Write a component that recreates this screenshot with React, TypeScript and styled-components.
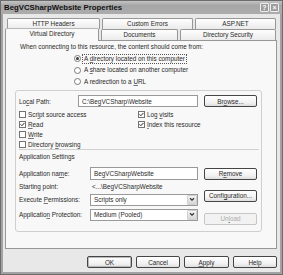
import React from 'react';
import styled, { createGlobalStyle } from 'styled-components';

const Global = createGlobalStyle`
  html, body { margin: 0; padding: 0; background: #e8e8e8; }
  body { font-family: "Liberation Sans", Arial, sans-serif; font-size: 6.35px; color: #2a2a2a; }
  * { box-sizing: border-box; }
`;

const Window = styled.div`
  width: 283px;
  height: 275px;
  display: flex;
  flex-direction: column;
  background: #a2a2a2;
  border: 1px solid #6c6c6c;
`;

const TitleBar = styled.div`
  height: 13px;
  display: flex;
  align-items: center;
  padding: 0 3px 0 3px;
  background: linear-gradient(#c4c4c4, #a6a6a6 35%, #acacac);
`;

const TitleText = styled.div`
  flex: 1;
  font-weight: bold;
  font-size: 7.8px;
  color: #111;
  line-height: 9px;
`;

const TitleButton = styled.div`
  width: 9px;
  height: 9px;
  margin-left: 1px;
  border: 1px solid #efefef;
  border-radius: 1px;
  background: #9c9c9c;
  color: #fff;
  font-size: 7px;
  font-weight: bold;
  line-height: 7px;
  text-align: center;
`;

const Body = styled.div`
  flex: 1;
  margin: 0 2px 2px 2px;
  background: #e8e8e8;
  padding: 4px 3px 0 2px;
  display: flex;
  flex-direction: column;
`;

const TabRow = styled.div<{ $indent: number }>`
  display: flex;
  height: 11px;
  gap: 2px;
  padding-left: ${p => p.$indent}px;
  align-items: flex-start;
`;

const Tab = styled.div<{ $w: number; $active?: boolean }>`
  width: ${p => p.$w}px;
  height: ${p => (p.$active ? 13 : 11)}px;
  margin-top: ${p => (p.$active ? -1 : 0)}px;
  position: ${p => (p.$active ? 'relative' : 'static')};
  border: 1px solid #979797;
  border-bottom: none;
  border-top-color: ${p => (p.$active ? '#b8b8b8' : '#979797')};
  border-radius: 2px 2px 0 0;
  background: ${p => (p.$active ? '#f9f9f9' : 'linear-gradient(#fefefe, #ebebeb)')};
  text-align: center;
  line-height: 9px;
  white-space: nowrap;
`;

const Panel = styled.div`
  height: 209px;
  border: 1px solid #979797;
  background: #f8f8f8;
  display: flex;
  flex-direction: column;
`;

const Intro = styled.div`
  margin: 1px 0 0 14px;
  line-height: 9px;
`;

const RadioList = styled.div`
  margin: 2px 0 0 68px;
  display: flex;
  flex-direction: column;
`;

const RadioRow = styled.div`
  height: 11.5px;
  display: flex;
  align-items: center;
`;

const RadioDot = styled.span<{ $on?: boolean }>`
  width: 7px;
  height: 7px;
  border-radius: 50%;
  border: 1px solid #7a7a7a;
  background: #fff;
  display: flex;
  align-items: center;
  justify-content: center;
  margin-right: 2px;
  &::after {
    content: '';
    width: 3px;
    height: 3px;
    border-radius: 50%;
    background: ${p => (p.$on ? '#3a3a3a' : 'transparent')};
  }
`;

const Label = styled.span<{ $focus?: boolean }>`
  line-height: 8px;
  padding: 0 1px;
  outline: ${p => (p.$focus ? '1px dotted #555' : 'none')};
  white-space: nowrap;
`;

const Key = styled.span`
  text-decoration: underline;
  text-decoration-color: #777;
  text-underline-offset: 0.5px;
`;

const GroupBox = styled.div`
  margin: 2.5px 0 0 9px;
  width: 247px;
  height: 142px;
  border: 1px solid #cfcfcf;
  border-radius: 3px;
  padding: 4px 0 0 3px;
  display: flex;
  flex-direction: column;
`;

const PathRow = styled.div`
  display: flex;
  align-items: center;
  height: 12px;
`;

const FieldLabel = styled.div<{ $w: number }>`
  width: ${p => p.$w}px;
  white-space: nowrap;
`;

const TextBox = styled.div<{ $w: number; $h?: number }>`
  width: ${p => p.$w}px;
  height: ${p => p.$h ?? 12}px;
  border: 1px solid #999;
  background: #fff;
  padding-left: 3px;
  display: flex;
  align-items: center;
  white-space: nowrap;
`;

const Button = styled.div<{ $w?: number; $disabled?: boolean; $default?: boolean }>`
  width: ${p => p.$w ?? 53}px;
  height: 12px;
  border: 1px solid ${p => (p.$disabled ? '#c6c6c6' : '#454545')};
  border-radius: 2px;
  background: ${p => (p.$disabled ? '#f2f2f2' : 'linear-gradient(#ffffff, #f0f0f0 70%, #dcdcdc)')};
  box-shadow: ${p => (p.$default ? 'inset 0 0 0 1px #b9b9b9' : 'none')};
  color: ${p => (p.$disabled ? '#ababab' : 'inherit')};
  display: flex;
  align-items: center;
  justify-content: center;
  white-space: nowrap;
`;

const CheckGrid = styled.div`
  margin-top: 2.5px;
  display: grid;
  grid-template-columns: 119px 1fr;
  grid-auto-rows: 10px;
`;

const CheckRow = styled.div<{ $col: number; $row: number }>`
  grid-column: ${p => p.$col};
  grid-row: ${p => p.$row};
  display: flex;
  align-items: center;
`;

const Box = styled.span`
  width: 7px;
  height: 7px;
  border: 1px solid #737373;
  background: #fff;
  margin-right: 1px;
  display: flex;
  align-items: center;
  justify-content: center;
`;

const Separator = styled.div`
  margin: -1px 2px 0 0;
  height: 1px;
  background: #d0d0d0;
`;

const SectionTitle = styled.div`
  margin-top: 2px;
  line-height: 9px;
`;

const AppArea = styled.div`
  margin-top: 6px;
  display: flex;
`;

const AppFields = styled.div`
  display: grid;
  grid-template-columns: 71px 108px;
  grid-template-rows: 13px 14px 12px 15px;
  align-items: end;
`;

const AppButtons = styled.div`
  margin-left: 6px;
  display: flex;
  flex-direction: column;
`;

const Select = styled.div`
  width: 108px;
  height: 12px;
  border: 1px solid #999;
  background: #fff;
  display: flex;
  align-items: center;
  padding-left: 3px;
`;

const SelectText = styled.span`
  flex: 1;
  white-space: nowrap;
`;

const DropButton = styled.span`
  width: 10px;
  height: 10px;
  border: 1px solid #cfcfcf;
  border-radius: 1px;
  background: linear-gradient(#f4f4f4, #d6d6d6);
  display: flex;
  align-items: center;
  justify-content: center;
`;

const ValueText = styled.div`
  padding-left: 2px;
  white-space: nowrap;
  align-self: center;
`;

const RowLabel = styled.div`
  white-space: nowrap;
  align-self: center;
`;

const BottomLabel = styled.div`
  white-space: nowrap;
  align-self: end;
  line-height: 12px;
`;

const Footer = styled.div`
  margin-top: 7px;
  display: flex;
  justify-content: flex-end;
  gap: 4px;
`;

const Check = () => (
  <svg width="5" height="5" viewBox="0 0 5 5">
    <path d="M0.5 2.3 L1.9 3.7 L4.5 0.9" fill="none" stroke="#222" strokeWidth="1" />
  </svg>
);

const Chevron = () => (
  <svg width="6" height="5" viewBox="0 0 6 5">
    <path d="M1 1.2 L3 3.2 L5 1.2" fill="none" stroke="#333" strokeWidth="1.3" />
  </svg>
);

const CheckItem = ({ col, row, on, children }: { col: number; row: number; on?: boolean; children: React.ReactNode }) => (
  <CheckRow $col={col} $row={row}>
    <Box>{on && <Check />}</Box>
    <Label>{children}</Label>
  </CheckRow>
);

export default function App() {
  return (
    <>
      <Global />
      <Window>
        <TitleBar>
          <TitleText>BegVCSharpWebsite Properties</TitleText>
          <TitleButton>?</TitleButton>
          <TitleButton>×</TitleButton>
        </TitleBar>
        <Body>
          <TabRow $indent={2}>
            <Tab $w={93}>HTTP Headers</Tab>
            <Tab $w={91}>Custom Errors</Tab>
            <Tab $w={81}>ASP.NET</Tab>
          </TabRow>
          <TabRow $indent={0}>
            <Tab $w={94} $active>Virtual Directory</Tab>
            <Tab $w={77}>Documents</Tab>
            <Tab $w={96}>Directory Security</Tab>
          </TabRow>
          <Panel>
            <Intro>When connecting to this resource, the content should come from:</Intro>
            <RadioList>
              <RadioRow>
                <RadioDot $on />
                <Label $focus>A <Key>d</Key>irectory located on this computer</Label>
              </RadioRow>
              <RadioRow>
                <RadioDot />
                <Label>A <Key>s</Key>hare located on another computer</Label>
              </RadioRow>
              <RadioRow>
                <RadioDot />
                <Label>A redirection to a <Key>U</Key>RL</Label>
              </RadioRow>
            </RadioList>
            <GroupBox>
              <PathRow>
                <FieldLabel $w={59}>Lo<Key>c</Key>al Path:</FieldLabel>
                <TextBox $w={120}>C:\BegVCSharp\Website</TextBox>
                <Button style={{ marginLeft: 6 }}>Br<Key>o</Key>wse...</Button>
              </PathRow>
              <CheckGrid>
                <CheckItem col={1} row={1}>Scr<Key>i</Key>pt source access</CheckItem>
                <CheckItem col={1} row={2} on><Key>R</Key>ead</CheckItem>
                <CheckItem col={1} row={3}><Key>W</Key>rite</CheckItem>
                <CheckItem col={1} row={4}>Directory <Key>b</Key>rowsing</CheckItem>
                <CheckItem col={2} row={1} on>Log <Key>v</Key>isits</CheckItem>
                <CheckItem col={2} row={2} on><Key>I</Key>ndex this resource</CheckItem>
              </CheckGrid>
              <Separator />
              <SectionTitle>Application Settings</SectionTitle>
              <AppArea>
                <AppFields>
                  <RowLabel>Application na<Key>m</Key>e:</RowLabel>
                  <TextBox $w={108} $h={13}>BegVCSharpWebsite</TextBox>
                  <RowLabel>Starting point:</RowLabel>
                  <ValueText>&lt;...\BegVCSharpWebsite</ValueText>
                  <RowLabel>Execute <Key>P</Key>ermissions:</RowLabel>
                  <Select>
                    <SelectText>Scripts only</SelectText>
                    <DropButton><Chevron /></DropButton>
                  </Select>
                  <BottomLabel>Applicatio<Key>n</Key> Protection:</BottomLabel>
                  <Select>
                    <SelectText>Medium (Pooled)</SelectText>
                    <DropButton><Chevron /></DropButton>
                  </Select>
                </AppFields>
                <AppButtons>
                  <Button style={{ marginTop: 1 }}>R<Key>e</Key>move</Button>
                  <Button style={{ marginTop: 10 }}>Confi<Key>g</Key>uration...</Button>
                  <Button $disabled style={{ marginTop: 11 }}>Un<Key>l</Key>oad</Button>
                </AppButtons>
              </AppArea>
            </GroupBox>
          </Panel>
          <Footer>
            <Button $w={45} $default>OK</Button>
            <Button $w={44}>Cancel</Button>
            <Button $w={45}><Key>A</Key>pply</Button>
            <Button $w={44}>Help</Button>
          </Footer>
        </Body>
      </Window>
    </>
  );
}
